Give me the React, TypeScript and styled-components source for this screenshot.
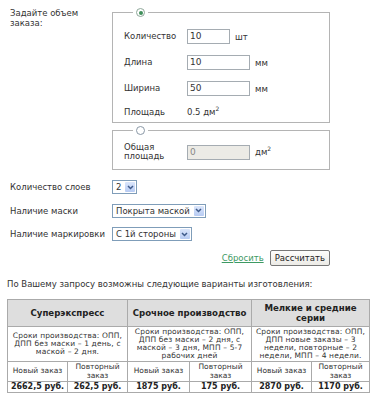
import React from 'react';
import styled, { createGlobalStyle } from 'styled-components';

const Global = createGlobalStyle`
  html, body { margin: 0; padding: 0; background: #fff; }
  body {
    font-family: "DejaVu Sans", Verdana, sans-serif;
    font-size: 8.5px;
    color: #333;
  }
`;

const Page = styled.div`
  width: 378px;
  height: 400px;
  overflow: hidden;
  box-sizing: border-box;
  padding-top: 8px;
`;

const FormGrid = styled.div`
  display: grid;
  grid-template-columns: 102px 218px;
  padding-left: 10px;
  align-items: center;
`;

const TopLabel = styled.div`
  align-self: start;
  line-height: 10px;
  width: 70px;
`;

const Sets = styled.div`
  display: flex;
  flex-direction: column;
  gap: 3px;
`;

const Fieldset = styled.fieldset<{ $pt: number; $pb: number }>`
  margin: 0;
  min-width: 0;
  border: 1px solid #b4b4b4;
  padding: ${p => p.$pt}px 10px ${p => p.$pb}px 11px;
`;

const Legend = styled.legend`
  margin-left: 9px;
  padding: 0 3px;
  height: 9px;
  line-height: 0;
`;

const Radio = styled.span<{ $on?: boolean }>`
  display: inline-block;
  box-sizing: border-box;
  width: 9px;
  height: 9px;
  border-radius: 50%;
  border: 1px solid ${p => (p.$on ? '#8fa89a' : '#8a98a6')};
  background: #fff;
  position: relative;
  &::after {
    content: '';
    display: ${p => (p.$on ? 'block' : 'none')};
    position: absolute;
    left: 1.5px;
    top: 1.5px;
    width: 4px;
    height: 4px;
    border-radius: 50%;
    background: #3f8f5a;
  }
`;

const FieldRows = styled.div<{ $gap: number }>`
  display: grid;
  grid-template-columns: 63px auto;
  row-gap: ${p => p.$gap}px;
  align-items: center;
`;

const FieldLabel = styled.div`
  line-height: 9px;
`;

const FieldValue = styled.div`
  display: flex;
  align-items: center;
  gap: 5px;
`;

const TextInput = styled.div<{ $w: number; $disabled?: boolean }>`
  box-sizing: border-box;
  width: ${p => p.$w}px;
  height: 15px;
  border: 1px solid #a5acb2;
  background: ${p => (p.$disabled ? '#ecebe6' : '#fff')};
  color: ${p => (p.$disabled ? '#888' : '#333')};
  padding-left: 2px;
  line-height: 13px;
  font-size: 9px;
`;

const Unit = styled.span`
  font-size: 8.5px;
  sup {
    font-size: 6px;
    vertical-align: 4px;
    line-height: 0;
  }
`;

const SelectRows = styled.div`
  grid-column: 1 / 3;
  display: grid;
  grid-template-columns: 102px auto;
  row-gap: 9.5px;
  align-items: center;
  margin-top: 10px;
`;

const SelectBox = styled.div`
  display: inline-flex;
  align-items: center;
  justify-self: start;
  box-sizing: border-box;
  height: 14px;
  border: 1px solid #7f9db9;
  background: #fff;
  padding: 0 1px 0 3px;
  gap: 4px;
  font-size: 8.5px;
`;

const Arrow = styled.span`
  display: inline-flex;
  align-items: center;
  justify-content: center;
  width: 10px;
  height: 10px;
  background: linear-gradient(#dbe6fb, #b7cbf3);
  border-radius: 1px;
`;

const Actions = styled.div`
  grid-column: 1 / 3;
  display: flex;
  justify-content: flex-end;
  align-items: center;
  gap: 6px;
  margin-top: 9px;
`;

const ResetLink = styled.a`
  color: #3d9a63;
  text-decoration: underline;
  font-size: 8.5px;
`;

const Button = styled.button`
  font-family: "DejaVu Sans", Verdana, sans-serif;
  font-size: 8.5px;
  color: #222;
  height: 16px;
  padding: 0 4px;
  border: 1px solid #777;
  border-radius: 2px;
  background: linear-gradient(#fdfdfb, #ecebe6);
`;

const Intro = styled.p`
  margin: 13px 0 0 7px;
  line-height: 10px;
`;

const Table = styled.table`
  margin: 10px 0 0 7px;
  width: 362px;
  border-collapse: collapse;
  table-layout: fixed;
  border: 1px solid #999;
`;

const Th = styled.th`
  background: #dedede;
  border: 1px solid #aaa;
  font-size: 8.6px;
  font-weight: bold;
  color: #222;
  height: 26px;
  line-height: 10px;
  padding: 0 1px;
`;

const Desc = styled.td`
  border: 1px solid #aaa;
  text-align: center;
  font-size: 7.5px;
  line-height: 8.2px;
  height: 34px;
  padding: 0 3px;
  letter-spacing: 0.15px;
`;

const Sub = styled.td`
  border: 1px solid #aaa;
  text-align: center;
  font-size: 7.5px;
  line-height: 8.2px;
  height: 19px;
  padding: 0 2px;
`;

const Price = styled.td`
  border: 1px solid #aaa;
  text-align: center;
  font-size: 8px;
  font-weight: bold;
  color: #222;
  height: 10px;
  line-height: 10px;
  padding: 0;
`;

const Chevron = () => (
  <svg width="7" height="5" viewBox="0 0 7 5">
    <path d="M1 1 L3.5 3.5 L6 1" stroke="#3e5a8a" strokeWidth="1.5" fill="none" />
  </svg>
);

const Select = ({ children }: { children: React.ReactNode }) => (
  <SelectBox>
    <span>{children}</span>
    <Arrow>
      <Chevron />
    </Arrow>
  </SelectBox>
);

const plans = [
  {
    title: 'Суперэкспресс',
    desc: 'Сроки производства: ОПП, ДПП без маски – 1 день, с маской – 2 дня.',
    prices: ['2662,5 руб.', '262,5 руб.'],
  },
  {
    title: 'Срочное производство',
    desc: 'Сроки производства: ОПП, ДПП без маски – 2 дня, с маской – 3 дня, МПП – 5-7 рабочих дней',
    prices: ['1875 руб.', '175 руб.'],
  },
  {
    title: 'Мелкие и средние серии',
    desc: 'Сроки производства: ОПП, ДПП новые заказы – 3 недели, повторные – 2 недели, МПП – 4 недели.',
    prices: ['2870 руб.', '1170 руб.'],
  },
];

export default function App() {
  return (
    <Page>
      <Global />
      <FormGrid>
        <TopLabel>Задайте объем заказа:</TopLabel>
        <Sets>
          <Fieldset $pt={12} $pb={5}>
            <Legend>
              <Radio $on />
            </Legend>
            <FieldRows $gap={11}>
              <FieldLabel>Количество</FieldLabel>
              <FieldValue>
                <TextInput $w={43}>10</TextInput>
                <Unit>шт</Unit>
              </FieldValue>
              <FieldLabel>Длина</FieldLabel>
              <FieldValue>
                <TextInput $w={63}>10</TextInput>
                <Unit>мм</Unit>
              </FieldValue>
              <FieldLabel>Ширина</FieldLabel>
              <FieldValue>
                <TextInput $w={63}>50</TextInput>
                <Unit>мм</Unit>
              </FieldValue>
              <FieldLabel>Площадь</FieldLabel>
              <FieldValue>
                <Unit>
                  0.5 дм<sup>2</sup>
                </Unit>
              </FieldValue>
            </FieldRows>
          </Fieldset>
          <Fieldset $pt={8} $pb={8}>
            <Legend>
              <Radio />
            </Legend>
            <FieldRows $gap={0}>
              <FieldLabel>
                Общая
                <br />
                площадь
              </FieldLabel>
              <FieldValue>
                <TextInput $w={63} $disabled>
                  0
                </TextInput>
                <Unit>
                  дм<sup>2</sup>
                </Unit>
              </FieldValue>
            </FieldRows>
          </Fieldset>
        </Sets>
        <SelectRows>
          <div>Количество слоев</div>
          <Select>2</Select>
          <div>Наличие маски</div>
          <Select>Покрыта маской</Select>
          <div>Наличие маркировки</div>
          <Select>С 1й стороны</Select>
        </SelectRows>
        <Actions>
          <ResetLink href="#">Сбросить</ResetLink>
          <Button>Рассчитать</Button>
        </Actions>
      </FormGrid>
      <Intro>По Вашему запросу возможны следующие варианты изготовления:</Intro>
      <Table>
        <colgroup>
          <col style={{ width: 60 }} />
          <col style={{ width: 60 }} />
          <col style={{ width: 62 }} />
          <col style={{ width: 62 }} />
          <col style={{ width: 60 }} />
          <col style={{ width: 58 }} />
        </colgroup>
        <tbody>
          <tr>
            {plans.map((p, i) => (
              <Th key={i} colSpan={2}>
                {p.title}
              </Th>
            ))}
          </tr>
          <tr>
            {plans.map((p, i) => (
              <Desc key={i} colSpan={2}>
                {p.desc}
              </Desc>
            ))}
          </tr>
          <tr>
            {plans.map((_, i) => (
              <React.Fragment key={i}>
                <Sub>Новый заказ</Sub>
                <Sub>Повторный заказ</Sub>
              </React.Fragment>
            ))}
          </tr>
          <tr>
            {plans.map((p, i) => (
              <React.Fragment key={i}>
                <Price>{p.prices[0]}</Price>
                <Price>{p.prices[1]}</Price>
              </React.Fragment>
            ))}
          </tr>
        </tbody>
      </Table>
    </Page>
  );
}
